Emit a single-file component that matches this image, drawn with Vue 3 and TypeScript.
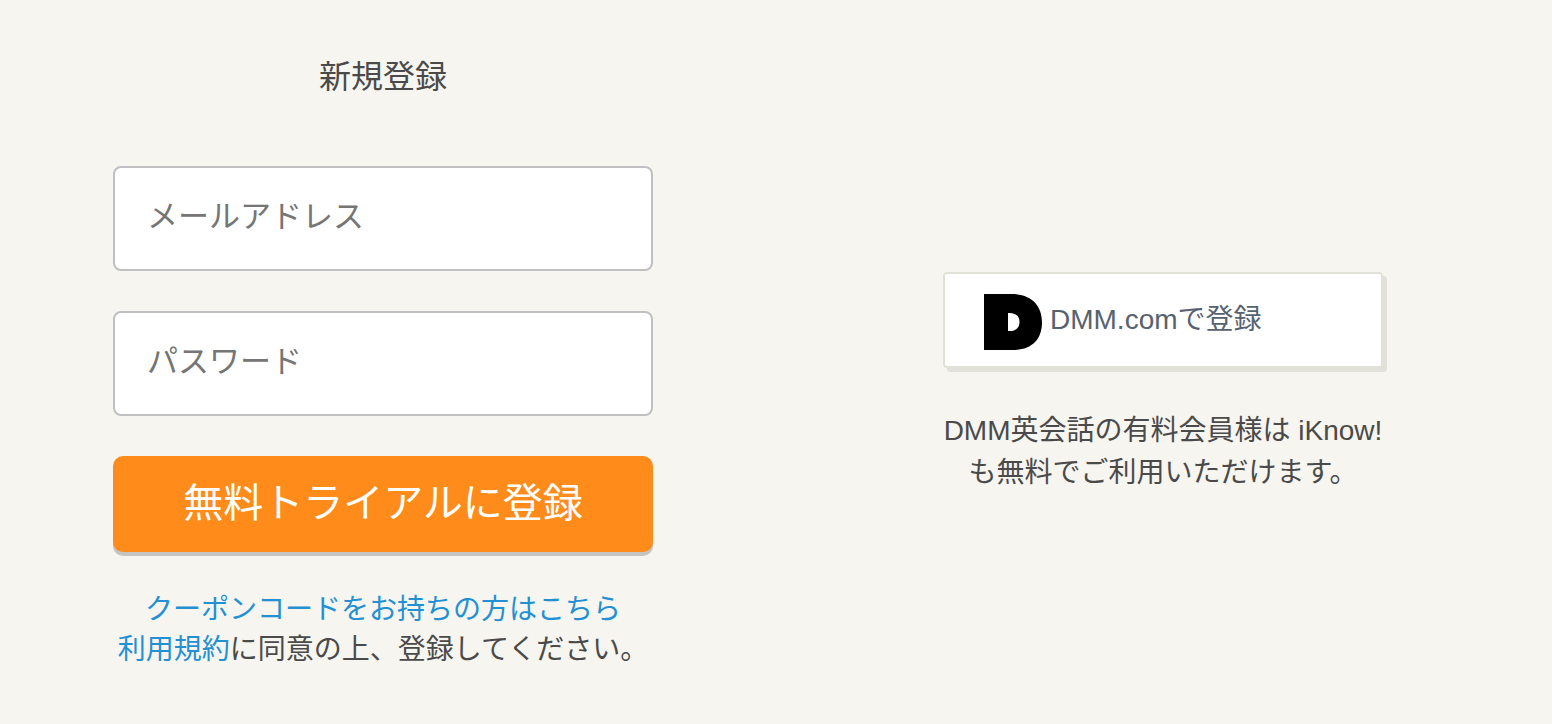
<script setup lang="ts">
import { ref } from 'vue'

const email = ref('')
const password = ref('')
</script>

<template>
  <main class="page">
    <section class="signup">
      <h1 class="title">新規登録</h1>
      <form class="form" @submit.prevent>
        <input v-model="email" class="field" type="email" placeholder="メールアドレス" aria-label="メールアドレス" />
        <input v-model="password" class="field" type="password" placeholder="パスワード" aria-label="パスワード" />
        <button class="submit" type="submit">無料トライアルに登録</button>
      </form>
      <p class="notes">
        <a href="#coupon">クーポンコードをお持ちの方はこちら</a><br />
        <a href="#terms">利用規約</a>に同意の上、登録してください。
      </p>
    </section>

    <section class="partner">
      <button class="dmm" type="button">
        <svg class="logo" viewBox="0 0 58 56" aria-hidden="true">
          <path
            fill="#000"
            fill-rule="evenodd"
            d="M0 0H27C47 0 58 11 58 28.500C58 46 47 56 29 56H0ZM24 19V37C31 37.500 35.500 34.500 35.500 28C35.500 21.500 31 18.500 24 19Z"
          />
        </svg>
        <span>DMM.comで登録</span>
      </button>
      <p class="about">DMM英会話の有料会員様は iKnow!<br />も無料でご利用いただけます。</p>
    </section>
  </main>
</template>

<style>
body {
  margin: 0;
  background: #f6f5f0;
}
</style>

<style scoped>
.page {
  box-sizing: border-box;
  min-height: 100vh;
  display: grid;
  grid-template-columns: minmax(0, 1fr) minmax(0, 1fr);
  column-gap: 240px;
  padding: 53px 119px 52px 113px;
  background: #f6f5f0;
  color: #4a4a4a;
  font-family: "Liberation Sans", "Noto Sans CJK JP", sans-serif;
  font-size: 28px;
}

.title {
  margin: 0 0 65px;
  font-size: 32px;
  line-height: 48px;
  font-weight: 400;
  text-align: center;
}

.form {
  display: flex;
  flex-direction: column;
  gap: 40px;
}

.field {
  box-sizing: border-box;
  width: 100%;
  height: 105px;
  padding: 0 32px 4px;
  border: 2px solid #c0c0c2;
  border-radius: 8px;
  background: #fff;
  color: #4a4a4a;
  font-family: inherit;
  font-size: 31px;
}

.field::placeholder {
  color: #757575;
  opacity: 1;
}

.submit {
  height: 96px;
  padding: 0 0 8px;
  border: 0;
  border-radius: 10px;
  background: #ff8c1a;
  box-shadow: 0 4px 0 #c5c4c0;
  color: #fff;
  font-family: inherit;
  font-size: 40px;
  cursor: pointer;
}

.notes {
  margin: 38px 0 0;
  line-height: 40px;
  text-align: center;
  white-space: nowrap;
}

.notes a {
  color: #2390d4;
  text-decoration: none;
}

.partner {
  display: flex;
  flex-direction: column;
  align-items: center;
  padding-top: 219px;
}

.dmm {
  box-sizing: border-box;
  width: 100%;
  max-width: 440px;
  height: 96px;
  display: flex;
  align-items: center;
  gap: 8px;
  padding: 4px 39px 0;
  border: 2px solid #e1e1d9;
  border-radius: 4px;
  background: #fff;
  box-shadow: 4px 4px 0 #e1e1d9;
  color: #566270;
  font-family: inherit;
  font-size: 28px;
  cursor: pointer;
}

.dmm span {
  padding-bottom: 10px;
}

.logo {
  flex: none;
  width: 58px;
  height: 56px;
}

.about {
  margin: 42px 0 0;
  line-height: 42px;
  text-align: center;
  white-space: nowrap;
}
</style>
